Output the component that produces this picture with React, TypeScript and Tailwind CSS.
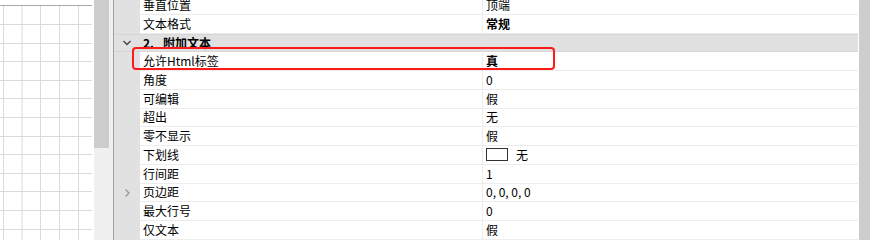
import React from 'react';

type Row = {
  name: string;
  value?: string;
  bold?: boolean;
  kind?: 'category' | 'underline';
  expand?: boolean;
};

const rows: Row[] = [
  { name: '垂直位置', value: '顶端' },
  { name: '文本格式', value: '常规', bold: true },
  { name: '附加文本', kind: 'category' },
  { name: '允许Html标签', value: '真', bold: true },
  { name: '角度', value: '0' },
  { name: '可编辑', value: '假' },
  { name: '超出', value: '无' },
  { name: '零不显示', value: '假' },
  { name: '下划线', value: '无', kind: 'underline' },
  { name: '行间距', value: '1' },
  { name: '页边距', value: '0, 0, 0, 0', expand: true },
  { name: '最大行号', value: '0' },
  { name: '仅文本', value: '假' },
];

const GridCanvas: React.FC = () => (
  <svg width="92" height="240" className="block">
    <rect width="92" height="240" fill="#ffffff" />
    {[3, 21.5, 40, 59, 78].map(x => (
      <line key={x} x1={x + 0.5} y1="6" x2={x + 0.5} y2="240" stroke="#dadada" />
    ))}
    {Array.from({ length: 13 }, (_, i) => 24 + i * 18.6).map(y => (
      <line key={y} x1="0" y1={Math.round(y) + 0.5} x2="92" y2={Math.round(y) + 0.5} stroke="#dadada" />
    ))}
    <line x1="0" y1="5.5" x2="92" y2="5.5" stroke="#a9a9a9" />
  </svg>
);

const App: React.FC = () => {
  return (
    <div
      className="flex w-[870px] h-[240px] overflow-hidden bg-white text-[12px] text-black"
      style={{ fontFamily: '"Noto Sans CJK SC", "Noto Sans", sans-serif' }}
    >
      <GridCanvas />
      <div className="w-[2px] bg-white" />
      <div className="flex flex-col w-[15px]">
        <div className="h-[148px] bg-[#cdcdcd]" />
        <div className="flex-1 bg-[#f0f0f0]" />
      </div>
      <div className="w-[4px] bg-[#f0f0f0]" />
      <div className="w-px bg-[#a0a0a0]" />

      <div className="relative flex-1 overflow-hidden">
        <div className="-mt-[4px]">
          {rows.map((row, i) =>
            row.kind === 'category' ? (
              <div key={i} className="flex h-[18.75px] bg-[#e1e1e1] border-y border-[#d6d6d6]">
                <div className="w-[26px] flex items-center justify-center">
                  <svg width="10" height="10" viewBox="0 0 10 10">
                    <path d="M1.5 3 L5 6.5 L8.5 3" fill="none" stroke="#444" strokeWidth="1.3" />
                  </svg>
                </div>
                <div className="flex items-center pl-[3px] font-bold leading-none">
                  <span className="w-[20px]">2.</span>
                  <span>{row.name}</span>
                </div>
              </div>
            ) : (
              <div key={i} className="flex h-[18.75px]">
                <div className="w-[26px] bg-[#e1e1e1] flex items-center justify-center">
                  {row.expand && (
                    <svg width="10" height="10" viewBox="0 0 10 10">
                      <path d="M3.5 1.5 L7 5 L3.5 8.5" fill="none" stroke="#999" strokeWidth="1.3" />
                    </svg>
                  )}
                </div>
                <div className="flex flex-1 border-b border-[#ececec]">
                  <div className="w-[342px] flex items-center pl-[3px] leading-none">{row.name}</div>
                  <div className="w-px bg-[#ececec]" />
                  <div className={`flex-1 flex items-center pl-[3px] leading-none ${row.bold ? 'font-bold' : ''}`}>
                    {row.kind === 'underline' && (
                      <span className="inline-block w-[22px] h-[13px] border border-[#333] bg-white mr-[8px]" />
                    )}
                    {row.value}
                  </div>
                </div>
              </div>
            )
          )}
        </div>
        <div className="absolute left-[18px] top-[47px] w-[423px] h-[23px] border-2 border-[#ff1a1a] rounded-[4px]" />
      </div>

      <div className="w-px bg-white" />
      <div className="w-[11px] bg-[#cdcdcd]" />
    </div>
  );
};

export default App;
